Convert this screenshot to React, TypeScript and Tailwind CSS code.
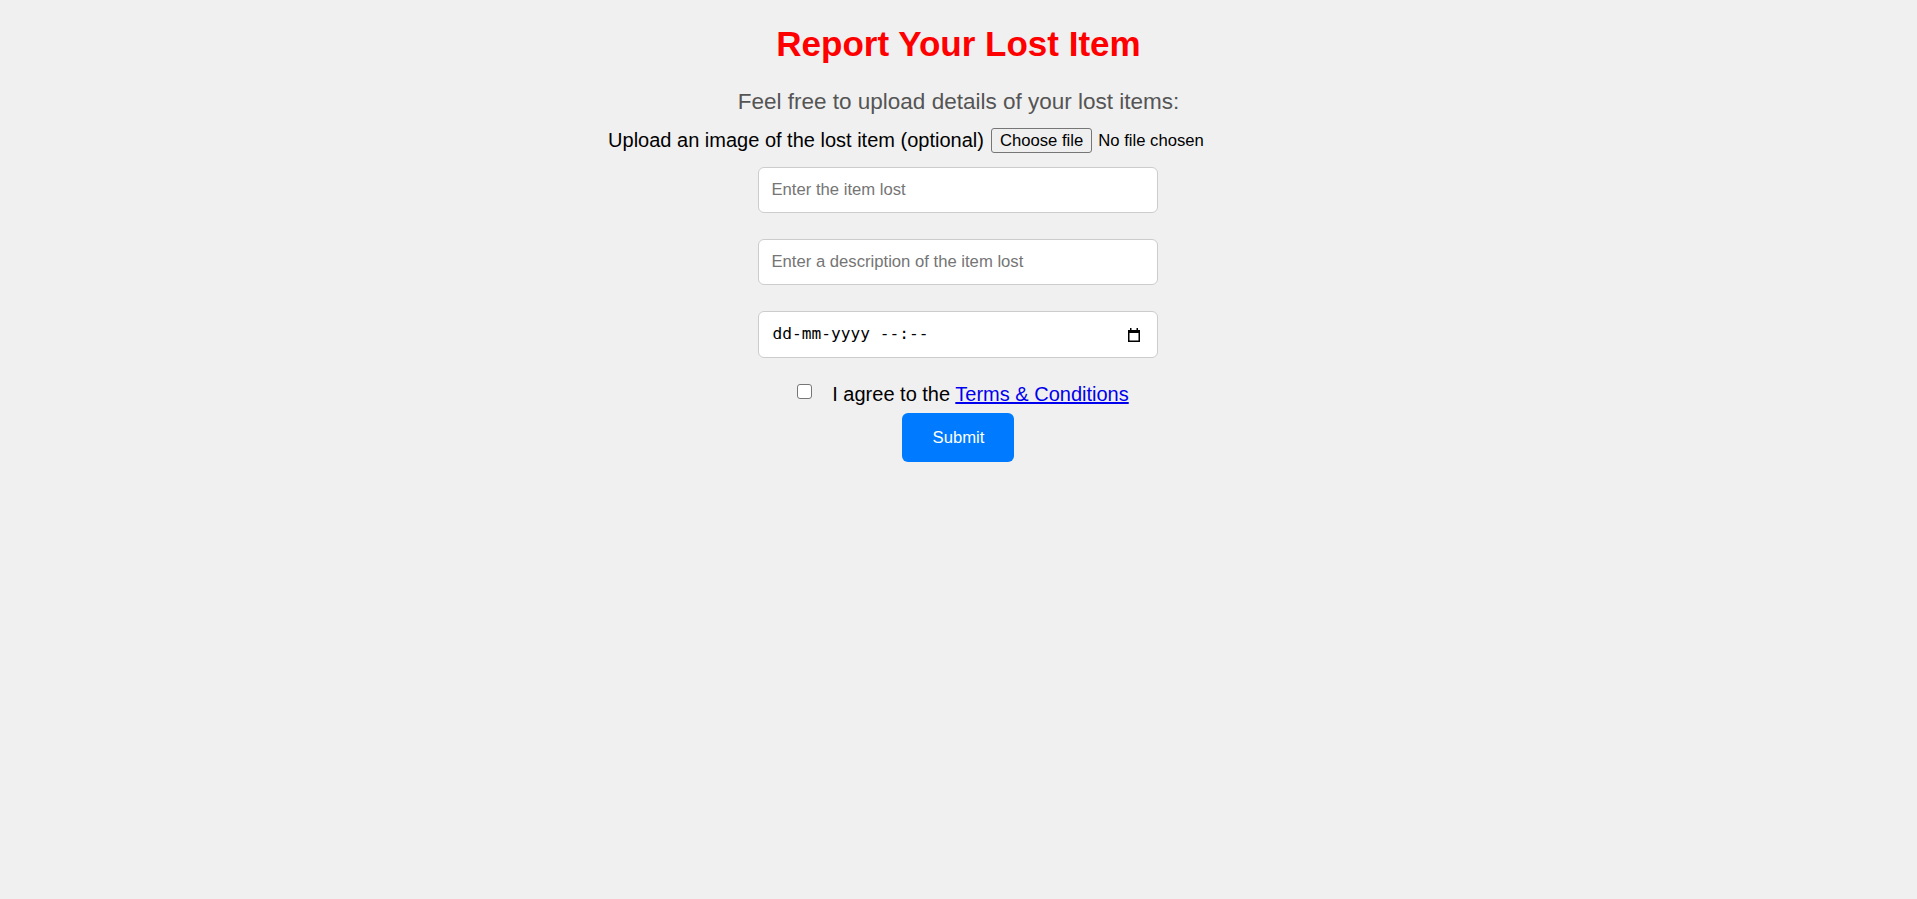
import React from "react";

const CalendarIcon = () => (
  <svg width="14" height="15" viewBox="0 0 14 15" fill="none">
    <rect x="1.75" y="3.75" width="10.5" height="10.5" stroke="black" strokeWidth="1.5" />
    <rect x="1" y="3" width="12" height="3" fill="black" />
    <rect x="3" y="1" width="1.5" height="3" fill="black" />
    <rect x="9.5" y="1" width="1.5" height="3" fill="black" />
  </svg>
);

const ReportLostItem = () => {
  const [fileName, setFileName] = React.useState("");

  return (
    <div className="min-h-screen bg-[#f0f0f0] font-['Liberation_Sans',Arial,sans-serif] text-black flex flex-col items-center">
      <h1 className="mt-[24px] text-[35px] leading-[39px] font-bold text-[#ff0000]">
        Report Your Lost Item
      </h1>
      <p className="mt-[26px] text-[22.5px] leading-[26px] text-[#555555]">
        Feel free to upload details of your lost items:
      </p>

      <form className="flex flex-col items-center" onSubmit={(e) => e.preventDefault()}>
        <div className="mt-[13px] h-[25px] flex items-center gap-[7px]">
          <span className="text-[20px] leading-[23px]">
            Upload an image of the lost item (optional)
          </span>
          <label className="w-[318px] flex items-center text-[16.67px] leading-[19px] cursor-pointer">
            <input
              type="file"
              className="hidden"
              onChange={(e) => setFileName(e.target.files?.[0]?.name || "")}
            />
            <span className="px-[8px] py-[2px] border border-[#767676] rounded-[3px] bg-[#efefef]">
              Choose file
            </span>
            <span className="ml-[6px]">{fileName || "No file chosen"}</span>
          </label>
        </div>

        <input
          type="text"
          placeholder="Enter the item lost"
          className="mt-[14px] w-[400px] h-[46px] px-[12px] bg-white border border-[#cccccc] rounded-[6px] text-[16.67px] placeholder:text-[#757575] outline-none"
        />
        <input
          type="text"
          placeholder="Enter a description of the item lost"
          className="mt-[26px] w-[400px] h-[46px] px-[12px] bg-white border border-[#cccccc] rounded-[6px] text-[16.67px] placeholder:text-[#757575] outline-none"
        />
        <div className="mt-[26px] w-[400px] h-[47px] pl-[13px] pr-[16px] bg-white border border-[#cccccc] rounded-[6px] flex items-center justify-between">
          <span className="font-['DejaVu_Sans_Mono',monospace] text-[16.2px] text-black">
            dd-mm-yyyy --:--
          </span>
          <CalendarIcon />
        </div>

        <div className="mt-[25px] flex items-start text-[20px] leading-[23px]">
          <input
            id="terms"
            type="checkbox"
            className="appearance-none w-[15px] h-[15px] mt-[1px] ml-[9px] mr-[20px] bg-white border border-[#767676] rounded-[3px]"
          />
          <label htmlFor="terms">
            I agree to the{" "}
            <a href="#" className="text-[#0000ee] underline">
              Terms &amp; Conditions
            </a>
          </label>
        </div>

        <button
          type="submit"
          className="mt-[7px] w-[112px] h-[49px] bg-[#007bff] text-white text-[16.67px] rounded-[6px]"
        >
          Submit
        </button>
      </form>
    </div>
  );
};

export default function App() {
  return <ReportLostItem />;
}
